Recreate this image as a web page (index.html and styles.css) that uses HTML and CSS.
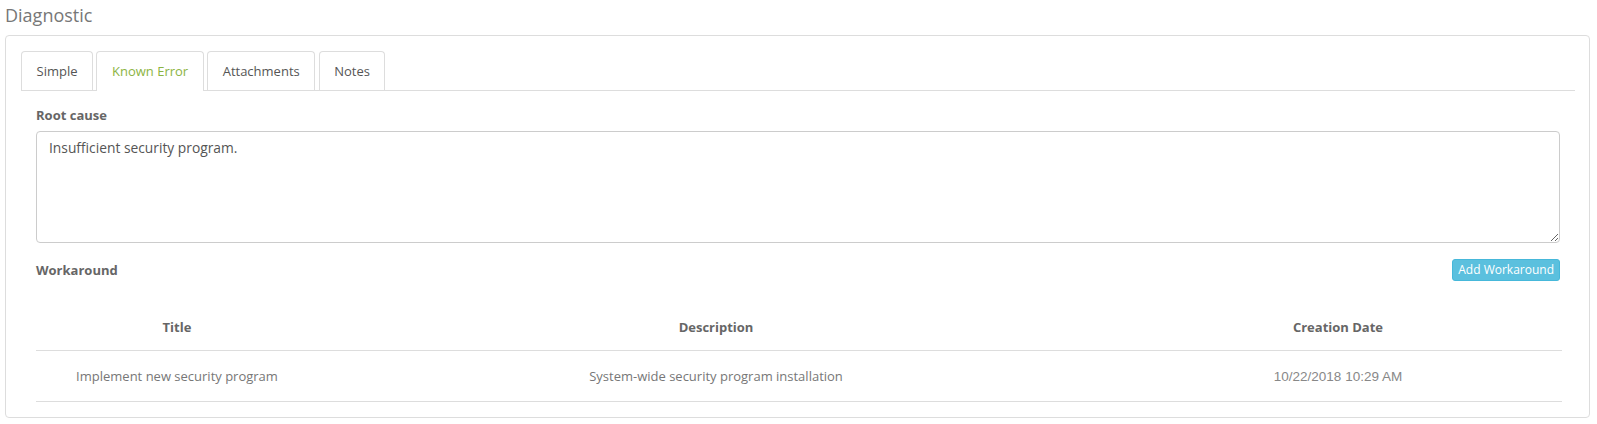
FILE: index.html
```html
<!DOCTYPE html>
<html lang="en">
<head>
<meta charset="utf-8">
<title>Diagnostic</title>
<link rel="stylesheet" href="styles.css">
</head>
<body>
<div class="page">
  <h2 class="page-title">Diagnostic</h2>
  <div class="panel">
    <ul class="tabs">
      <li class="tab">Simple</li>
      <li class="tab active">Known Error</li>
      <li class="tab">Attachments</li>
      <li class="tab">Notes</li>
    </ul>
    <div class="tab-content">
      <label class="field-label" for="rootcause">Root cause</label>
      <textarea id="rootcause" class="textarea">Insufficient security program.</textarea>
      <div class="section-row">
        <span class="field-label">Workaround</span>
        <button class="btn-info" type="button">Add Workaround</button>
      </div>
      <table class="grid">
        <colgroup>
          <col class="col-title">
          <col class="col-desc">
          <col class="col-date">
        </colgroup>
        <thead>
          <tr><th>Title</th><th>Description</th><th>Creation Date</th></tr>
        </thead>
        <tbody>
          <tr>
            <td>Implement new security program</td>
            <td>System-wide security program installation</td>
            <td class="date">10/22/2018 10:29 AM</td>
          </tr>
        </tbody>
      </table>
    </div>
  </div>
</div>
</body>
</html>
```

FILE: styles.css
```css
* { box-sizing: border-box; }
html, body { margin: 0; padding: 0; background: #fff; }
body {
  font-family: "Open Sans", "DejaVu Sans", sans-serif;
  font-size: 13px;
  color: #555;
}
.page {
  padding: 0 7px 0 5px;
}
.page-title {
  margin: 0;
  padding-top: 2px;
  font-size: 18px;
  font-weight: 400;
  line-height: 26px;
  color: #777;
  height: 35px;
}
.panel {
  border: 1px solid #ddd;
  border-radius: 4px;
  padding: 15px 14px 15px 15px;
  height: 383px;
}
.tabs {
  list-style: none;
  margin: 0;
  padding: 0;
  display: flex;
  gap: 3.5px;
  border-bottom: 1px solid #ddd;
}
.tab {
  border: 1px solid #ddd;
  border-bottom: none;
  border-radius: 4px 4px 0 0;
  padding: 10px 14.5px 9px;
  line-height: 19px;
  color: #555;
  background: #fff;
  margin-bottom: 0;
}
.tab.active {
  color: #8bb443;
  margin-bottom: -1px;
  padding-bottom: 10px;
}
.tab-content {
  padding: 15px 15px 0;
}
.field-label {
  display: block;
  font-weight: 700;
  color: #666;
  line-height: 18px;
}
.textarea {
  display: block;
  width: 100%;
  height: 112px;
  margin-top: 7px;
  padding: 6px 12px;
  border: 1px solid #ccc;
  border-radius: 4px;
  font-family: "Open Sans", "DejaVu Sans", sans-serif;
  font-size: 13.8px;
  line-height: 20px;
  color: #555;
  resize: vertical;
  background: #fff;
}
.section-row {
  display: flex;
  justify-content: space-between;
  align-items: center;
  margin-top: 16px;
}
.btn-info {
  font-family: "Open Sans", "DejaVu Sans", sans-serif;
  font-size: 12px;
  line-height: 18px;
  padding: 1px 5px;
  border: 1px solid #46b8da;
  border-radius: 3px;
  background: #5bc0de;
  color: #fff;
  cursor: pointer;
}
.grid {
  width: 100%;
  margin-top: 22px;
  border-collapse: collapse;
  table-layout: fixed;
}
.col-title { width: 282px; }
.col-desc { width: 796px; }
.col-date { width: 448px; }
.grid th {
  font-weight: 700;
  color: #666;
  text-align: center;
  padding: 15px 8px 14px;
  line-height: 18px;
  border-bottom: 1px solid #ddd;
}
.grid td {
  text-align: center;
  color: #777;
  padding: 16px 8px 15px;
  line-height: 19px;
  border-bottom: 1px solid #ddd;
}
.grid td.date {
  font-family: "Liberation Sans", Arial, sans-serif;
  font-size: 13.5px;
  color: #888;
}
```
